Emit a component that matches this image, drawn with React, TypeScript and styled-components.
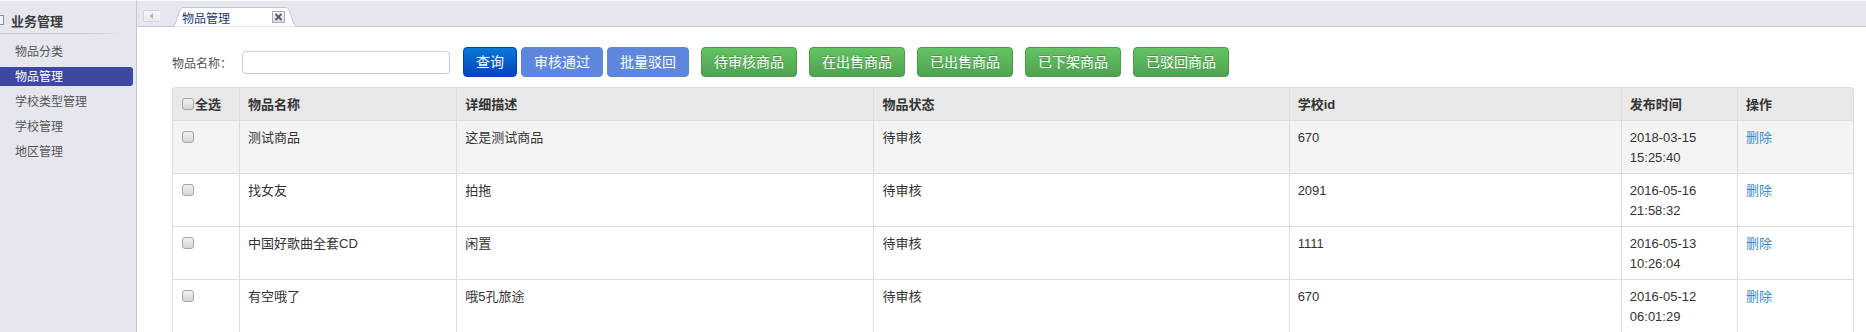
import React from 'react';
import styled, { createGlobalStyle, css } from 'styled-components';

const GlobalStyle = createGlobalStyle`
    html, body {
        margin: 0;
        padding: 0;
        background: #fff;
    }
    body {
        font-family: "Liberation Sans", "Noto Sans CJK SC", sans-serif;
        font-size: 12px;
        color: #333;
    }
`;

const Layout = styled.div`
    display: flex;
    width: 1866px;
    height: 332px;
    overflow: hidden;
`;

const Sidebar = styled.aside`
    flex: none;
    width: 137px;
    box-sizing: border-box;
    background: #e6e7ee;
    border-top: 1px solid #fafafc;
    border-right: 1px solid #c4c5da;
`;

const SideHeader = styled.div`
    display: flex;
    align-items: center;
    gap: 7px;
    height: 32px;
    box-sizing: border-box;
    padding-top: 6px;
    font-size: 13px;
    font-weight: bold;
    color: #3c3c3c;
`;

const HeaderIcon = styled.span`
    display: inline-block;
    width: 8px;
    height: 8px;
    margin-left: -6px;
    border: 1px solid #8c8ca2;
    background: #f4f4f8;
`;

const SideDivider = styled.div`
    width: 122px;
    height: 1px;
    background: linear-gradient(to right, #c6c7d8 0%, #c6c7d8 75%, rgba(198, 199, 216, 0) 100%);
`;

const Menu = styled.ul`
    list-style: none;
    margin: 0;
    padding: 8px 3px 0 0;
`;

const MenuItem = styled.li<{ $active?: boolean }>`
    height: 19px;
    box-sizing: border-box;
    padding: 2px 0 0 15px;
    line-height: 17px;
    margin-bottom: 6px;
    font-size: 12px;
    color: #555;
    border-radius: 0 3px 3px 0;

    ${p => p.$active && css`
        background: #3f48a1;
        color: #fff;
    `}
`;

const Main = styled.main`
    flex: 1;
    display: flex;
    flex-direction: column;
    min-width: 0;
`;

const TabBar = styled.div`
    display: flex;
    align-items: flex-end;
    height: 27px;
    box-sizing: border-box;
    padding-left: 6px;
    background: #e6e7ee;
    border-top: 1px solid #fafafc;
    border-bottom: 1px solid #c5c6d8;
`;

const ScrollButton = styled.span`
    display: flex;
    align-items: center;
    justify-content: center;
    align-self: flex-start;
    margin-top: 9px;
    width: 17px;
    height: 12px;
    box-sizing: border-box;
    border: 1px solid #d3d3dc;
    border-right-color: #f6f6f9;
    background: linear-gradient(#f6f6f8, #e9e9ee);
`;

const Tab = styled.div`
    position: relative;
    z-index: 1;
    display: flex;
    align-items: center;
    justify-content: space-between;
    width: 125px;
    height: 20px;
    box-sizing: border-box;
    margin-left: 12px;
    margin-bottom: -1px;
    padding: 0 12px 0 10px;
    font-size: 12px;
    color: #1d3a78;
`;

const TabShape = styled.svg`
    position: absolute;
    left: 0;
    top: 0;
    z-index: -1;
`;

const CloseButton = styled.span`
    display: flex;
    width: 13px;
    height: 12px;
`;

const Content = styled.div`
    padding: 20px 12px 0 35px;
`;

const Toolbar = styled.div`
    display: flex;
    align-items: center;
    height: 30px;
`;

const FieldLabel = styled.label`
    font-size: 12px;
    color: #555;
`;

const SearchInput = styled.input`
    width: 208px;
    height: 23px;
    box-sizing: border-box;
    margin: 0 13px 0 10px;
    padding: 2px 6px;
    border: 1px solid #ccc;
    border-radius: 4px;
    outline: none;
    font-family: inherit;
    font-size: 12px;
`;

const variants = {
    primary: css`
        background: linear-gradient(#0a78d8, #0045bb);
        border-color: #0040b0;
    `,
    muted: css`
        background: #5c87dd;
        border-color: #5c87dd;
    `,
    success: css`
        background: linear-gradient(#63c463, #50a250);
        border-color: #499a49;
        text-shadow: 0 -1px 0 rgba(0, 0, 0, 0.2);
    `,
};

const Button = styled.button<{ $variant: keyof typeof variants; $gap?: number }>`
    height: 30px;
    box-sizing: border-box;
    margin-right: ${p => p.$gap ?? 4}px;
    padding: 0 12px;
    border: 1px solid;
    border-radius: 4px;
    color: #fff;
    font-family: "Liberation Sans", "Noto Sans CJK SC", sans-serif;
    font-size: 14px;
    line-height: 28px;
    white-space: nowrap;
    ${p => variants[p.$variant]}
`;

const TableWrap = styled.div`
    margin-top: 10px;
    border: 1px solid #ddd;
    border-bottom: none;
    border-radius: 4px 4px 0 0;
    overflow: hidden;
`;

const Table = styled.table`
    width: 100%;
    table-layout: fixed;
    border-collapse: separate;
    border-spacing: 0;
`;

const cell = css`
    box-sizing: border-box;
    padding: 7px 8px 5px 8px;
    line-height: 20px;
    font-size: 13px;
    text-align: left;
    vertical-align: top;
    & + & {
        border-left: 1px solid #ddd;
    }
`;

const Th = styled.th`
    ${cell}
    background: #e8e8e8;
    font-weight: bold;
    color: #333;
`;

const Row = styled.tr<{ $highlight?: boolean }>`
    background: ${p => (p.$highlight ? '#f4f4f4' : '#fff')};
`;

const Td = styled.td`
    ${cell}
    border-top: 1px solid #ddd;
    color: #333;
`;

const CheckBox = styled.span`
    display: inline-block;
    width: 12px;
    height: 12px;
    box-sizing: border-box;
    margin: 0 1px 0 1px;
    vertical-align: -1px;
    border: 1px solid #a6a6a6;
    border-radius: 3px;
    background: linear-gradient(#f2f2f2, #d5d5d5);
`;

const DeleteLink = styled.a`
    color: #3a8bd0;
    text-decoration: none;
`;

const menu = ['物品分类', '物品管理', '学校类型管理', '学校管理', '地区管理'];

const columns = [
    { title: '物品名称', width: 217 },
    { title: '详细描述', width: 417 },
    { title: '物品状态', width: 415 },
    { title: '学校id', width: 332 },
    { title: '发布时间', width: 116 },
    { title: '操作', width: 116 },
];

const goods = [
    { name: '测试商品', desc: '这是测试商品', status: '待审核', school: '670', time: '2018-03-15 15:25:40' },
    { name: '找女友', desc: '拍拖', status: '待审核', school: '2091', time: '2016-05-16 21:58:32' },
    { name: '中国好歌曲全套CD', desc: '闲置', status: '待审核', school: '1111', time: '2016-05-13 10:26:04' },
    { name: '有空哦了', desc: '哦5孔旅途', status: '待审核', school: '670', time: '2016-05-12 06:01:29' },
];

const statusButtons = ['待审核商品', '在出售商品', '已出售商品', '已下架商品', '已驳回商品'];

export default function App() {
    return (
        <>
            <GlobalStyle />
            <Layout>
                <Sidebar>
                    <SideHeader>
                        <HeaderIcon />
                        业务管理
                    </SideHeader>
                    <SideDivider />
                    <Menu>
                        {menu.map(item => (
                            <MenuItem key={item} $active={item === '物品管理'}>
                                {item}
                            </MenuItem>
                        ))}
                    </Menu>
                </Sidebar>

                <Main>
                    <TabBar>
                        <ScrollButton>
                            <svg width="5" height="6" viewBox="0 0 5 6">
                                <path d="M4 0 L0.5 3 L4 6 Z" fill="#b4b4bc" />
                            </svg>
                        </ScrollButton>
                        <Tab>
                            <TabShape width="125" height="20" viewBox="0 0 125 20">
                                <path
                                    d="M0 20 C5 20 6 0.5 11 0.5 L114 0.5 C119 0.5 120 20 125 20 Z"
                                    fill="#fff"
                                    stroke="#c3c4d7"
                                />
                            </TabShape>
                            <span>物品管理</span>
                            <CloseButton>
                                <svg width="13" height="12" viewBox="0 0 13 12">
                                    <defs>
                                        <linearGradient id="closeBg" x1="0" y1="0" x2="0" y2="1">
                                            <stop offset="0" stopColor="#f7f7f9" />
                                            <stop offset="1" stopColor="#d9dae3" />
                                        </linearGradient>
                                    </defs>
                                    <rect x="0.5" y="0.5" width="12" height="11" fill="url(#closeBg)" stroke="#a9aabb" />
                                    <path d="M3.5 3 L9.5 9 M9.5 3 L3.5 9" stroke="#5a5a66" strokeWidth="1.8" />
                                </svg>
                            </CloseButton>
                        </Tab>
                    </TabBar>

                    <Content>
                        <Toolbar>
                            <FieldLabel>物品名称：</FieldLabel>
                            <SearchInput type="text" />
                            <Button $variant="primary">查询</Button>
                            <Button $variant="muted">审核通过</Button>
                            <Button $variant="muted" $gap={12}>批量驳回</Button>
                            {statusButtons.map(label => (
                                <Button key={label} $variant="success" $gap={12}>
                                    {label}
                                </Button>
                            ))}
                        </Toolbar>

                        <TableWrap>
                            <Table>
                                <colgroup>
                                    <col style={{ width: 66 }} />
                                    {columns.map(c => (
                                        <col key={c.title} style={{ width: c.width }} />
                                    ))}
                                </colgroup>
                                <thead>
                                    <tr>
                                        <Th>
                                            <CheckBox />全选
                                        </Th>
                                        {columns.map(c => (
                                            <Th key={c.title}>{c.title}</Th>
                                        ))}
                                    </tr>
                                </thead>
                                <tbody>
                                    {goods.map((g, i) => (
                                        <Row key={g.name} $highlight={i === 0}>
                                            <Td>
                                                <CheckBox />
                                            </Td>
                                            <Td>{g.name}</Td>
                                            <Td>{g.desc}</Td>
                                            <Td>{g.status}</Td>
                                            <Td>{g.school}</Td>
                                            <Td>{g.time}</Td>
                                            <Td>
                                                <DeleteLink href="#">删除</DeleteLink>
                                            </Td>
                                        </Row>
                                    ))}
                                </tbody>
                            </Table>
                        </TableWrap>
                    </Content>
                </Main>
            </Layout>
        </>
    );
}
